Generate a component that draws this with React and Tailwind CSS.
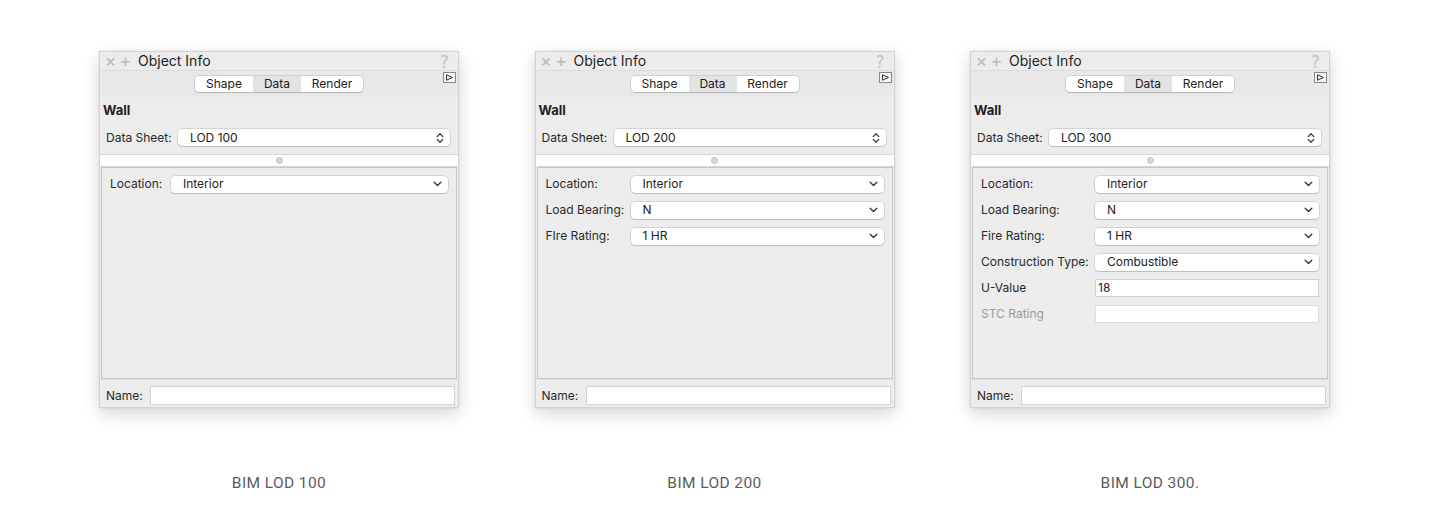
import React from "react";

const Chevron = () => (
  <svg width="9" height="6" viewBox="0 0 9 6">
    <path d="M1.2 1.2l3.3 3.3 3.3-3.3" fill="none" stroke="#3a3a3a" strokeWidth="1.4" strokeLinecap="round" strokeLinejoin="round" />
  </svg>
);

const UpDown = () => (
  <svg width="8" height="12" viewBox="0 0 8 12">
    <path d="M1.2 4.6L4 1.8l2.8 2.8M1.2 7.4L4 10.2l2.8-2.8" fill="none" stroke="#3a3a3a" strokeWidth="1.3" strokeLinecap="round" strokeLinejoin="round" />
  </svg>
);

function Select({ value, updown }) {
  return (
    <div className="flex-1 h-[17px] bg-white rounded-[4px] shadow-[0_0_0_0.5px_rgba(0,0,0,0.2),0_1px_1px_rgba(0,0,0,0.12)] flex items-center justify-between pl-[12px] pr-[6px] text-[12px] text-[#222] leading-none">
      <span>{value}</span>
      {updown ? <UpDown /> : <Chevron />}
    </div>
  );
}

function Field({ value, disabled }) {
  return (
    <div
      className={
        disabled
          ? "flex-1 h-[18px] bg-white border border-[#dedede] flex items-center pl-[2px] text-[12px] text-[#222] leading-none"
          : "flex-1 h-[18px] bg-white border border-[#cfcfcf] flex items-center pl-[2px] text-[12px] text-[#222] leading-none"
      }
    >
      {value}
    </div>
  );
}

function Row({ row, labelW }) {
  return (
    <div className="h-[26px] flex items-center">
      <div
        style={{ width: labelW }}
        className={row.disabled ? "text-[12px] text-[#9a9a9a] leading-none" : "text-[12px] text-[#2a2a2a] leading-none"}
      >
        {row.label}
      </div>
      {row.type === "field" ? <Field value={row.value} disabled={row.disabled} /> : <Select value={row.value} />}
    </div>
  );
}

function Panel({ lod, rows, labelW }) {
  return (
    <div className="w-[360px] h-[357px] bg-[#ececec] border border-[#d2d2d2] shadow-[0_6px_16px_rgba(0,0,0,0.16),0_0_3px_rgba(0,0,0,0.08)] flex flex-col font-['Inter',sans-serif] text-[#222]">
      {/* title bar */}
      <div className="h-[19px] flex items-center bg-[#ececec] border-b border-[#dcdcdc] relative">
        <span className="ml-[4px] text-[18px] text-[#b9b9b9] leading-none w-[13px] text-center">×</span>
        <span className="ml-[2px] text-[18px] text-[#b9b9b9] leading-none w-[13px] text-center">+</span>
        <span className="ml-[6px] text-[14px] text-[#1e1e1e] leading-none">Object Info</span>
        <span className="ml-auto mr-[9px] mt-[2px] text-[17px] text-[#c4c4c4] leading-none font-['DejaVu_Sans',sans-serif]">?</span>
      </div>
      {/* tabs band */}
      <div className="h-[26px] flex items-start justify-center bg-[#e8e8e8] relative">
        <div className="mt-[5px] h-[16px] flex rounded-[4px] bg-white shadow-[0_0_0_0.5px_rgba(0,0,0,0.2),0_1px_1px_rgba(0,0,0,0.12)] text-[12px] leading-none text-[#222] overflow-hidden">
          <div className="w-[58px] flex items-center justify-center">Shape</div>
          <div className="w-[48px] flex items-center justify-center bg-[#e3e3e3]">Data</div>
          <div className="w-[62px] flex items-center justify-center">Render</div>
        </div>
        <div className="absolute right-[2px] top-[1px] w-[13px] h-[11px] border border-[#8a8a8a] bg-[#f4f4f4] flex items-center justify-center">
          <svg width="9" height="7" viewBox="0 0 9 7">
            <path d="M1.5 0.8L7.5 3.5 1.5 6.2Z" fill="none" stroke="#333" strokeWidth="1" strokeLinejoin="round" />
          </svg>
        </div>
      </div>
      {/* Wall */}
      <div className="h-[27px] flex items-center pl-[3px] text-[13px] font-bold text-[#222] leading-none">Wall</div>
      {/* data sheet */}
      <div className="h-[30px] flex items-start pl-[6px] pr-[8px] pt-[5px]">
        <div className="w-[72px] text-[12px] leading-[17px] text-[#2a2a2a]">Data Sheet:</div>
        <Select value={lod} updown />
      </div>
      {/* splitter */}
      <div className="h-[13px] bg-white border-t border-b border-[#d6d6d6] flex items-center justify-center">
        <div className="w-[7px] h-[7px] rounded-full bg-[#d6d6d6] border border-[#c2c2c2]" />
      </div>
      {/* inner box */}
      <div className="flex-1 mx-[1px] border border-[#c6c6c6] bg-[#ececec] pl-[8px] pr-[8px] pt-[3px]">
        {rows.map((r) => (
          <Row key={r.label} row={r} labelW={labelW} />
        ))}
      </div>
      {/* name */}
      <div className="h-[28px] flex items-center pl-[6px] pr-[3px] border-t border-[#e0e0e0] pt-[4px]">
        <div className="w-[44px] text-[12px] text-[#2a2a2a] leading-none">Name:</div>
        <div className="flex-1 h-[19px] bg-white border border-[#d4d4d4]" />
      </div>
    </div>
  );
}

export default function App() {
  const panels = [
    {
      lod: "LOD 100",
      caption: "BIM LOD 100",
      labelW: 61,
      rows: [{ label: "Location:", value: "Interior" }],
    },
    {
      lod: "LOD 200",
      caption: "BIM LOD 200",
      labelW: 85,
      rows: [
        { label: "Location:", value: "Interior" },
        { label: "Load Bearing:", value: "N" },
        { label: "FIre Rating:", value: "1 HR" },
      ],
    },
    {
      lod: "LOD 300",
      caption: "BIM LOD 300.",
      labelW: 114,
      rows: [
        { label: "Location:", value: "Interior" },
        { label: "Load Bearing:", value: "N" },
        { label: "Fire Rating:", value: "1 HR" },
        { label: "Construction Type:", value: "Combustible" },
        { label: "U-Value", value: "18", type: "field" },
        { label: "STC Rating", value: "", type: "field", disabled: true },
      ],
    },
  ];
  return (
    <div className="w-[1440px] h-[518px] bg-white pl-[99px] pt-[51px] flex gap-[75.5px]">
      {panels.map((p) => (
        <div key={p.lod} className="flex flex-col items-center">
          <Panel lod={p.lod} rows={p.rows} labelW={p.labelW} />
          <div className="mt-[68px] text-[15.5px] text-[#5c5c5c] font-['Roboto',sans-serif] tracking-[0.4px] leading-none">
            {p.caption}
          </div>
        </div>
      ))}
    </div>
  );
}
